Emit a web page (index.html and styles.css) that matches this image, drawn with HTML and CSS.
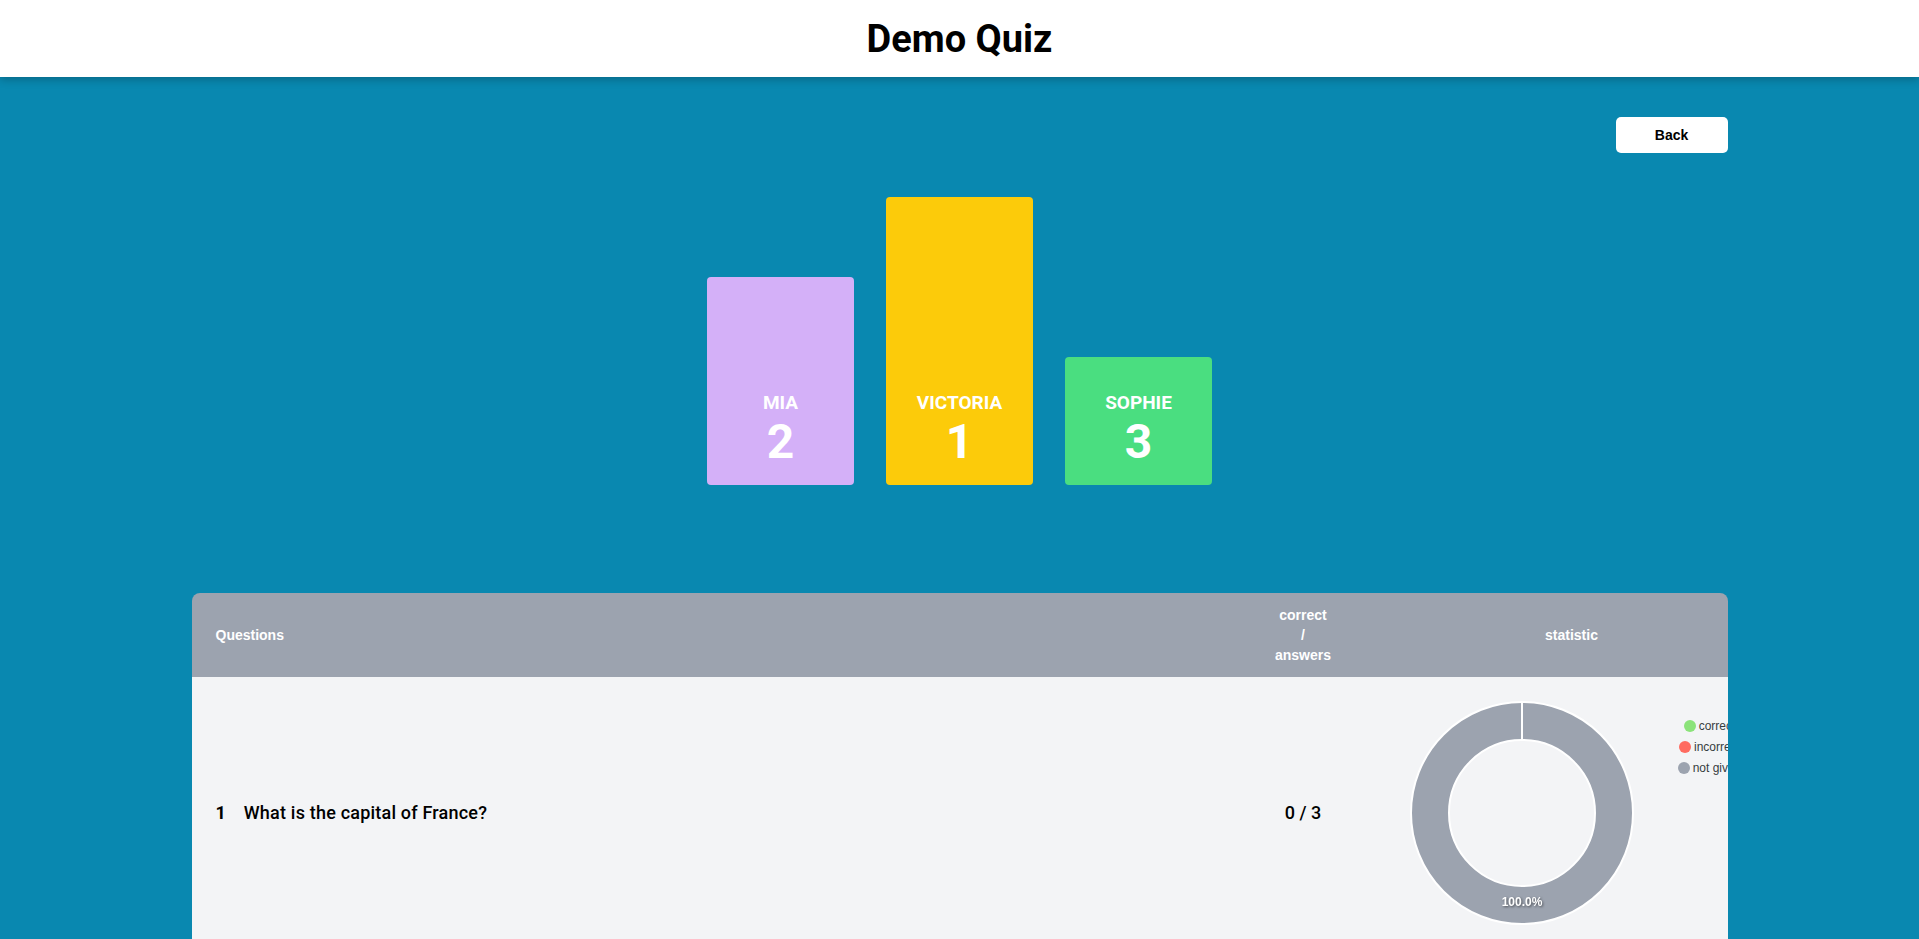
FILE: index.html
```html
<!DOCTYPE html>
<html lang="en">
<head>
<meta charset="utf-8">
<title>Demo Quiz</title>
<link rel="stylesheet" href="styles.css">
</head>
<body>
<header class="topbar">
  <h1 class="title">Demo Quiz</h1>
</header>
<main class="container">
  <div class="actions">
    <button class="back-btn" type="button">Back</button>
  </div>
  <div class="podium">
    <div class="bar bar-second">
      <span class="bar-name">MIA</span>
      <span class="bar-rank">2</span>
    </div>
    <div class="bar bar-first">
      <span class="bar-name">VICTORIA</span>
      <span class="bar-rank">1</span>
    </div>
    <div class="bar bar-third">
      <span class="bar-name">SOPHIE</span>
      <span class="bar-rank">3</span>
    </div>
  </div>
  <section class="results">
    <div class="results-head">
      <div class="head-question">Questions</div>
      <div class="head-score">correct<br>/<br>answers</div>
      <div class="head-stat">statistic</div>
    </div>
    <div class="results-row">
      <div class="question">
        <span class="q-num">1</span>
        <span class="q-text">What is the capital of France?</span>
      </div>
      <div class="score">0 / 3</div>
      <div class="stat">
        <svg class="donut" width="226" height="226" viewBox="0 0 226 226">
          <circle cx="113" cy="113" r="92" fill="none" stroke="#9ca3af" stroke-width="38"/>
          <circle cx="113" cy="113" r="111" fill="none" stroke="#ffffff" stroke-width="2"/>
          <circle cx="113" cy="113" r="73" fill="none" stroke="#ffffff" stroke-width="2"/>
          <line x1="113" y1="1" x2="113" y2="41" stroke="#ffffff" stroke-width="2"/>
          <text class="donut-label" x="113" y="206" text-anchor="middle">100.0%</text>
        </svg>
        <ul class="legend">
          <li class="legend-item"><span class="dot dot-correct"></span>correct</li>
          <li class="legend-item"><span class="dot dot-incorrect"></span>incorrect</li>
          <li class="legend-item"><span class="dot dot-none"></span>not given</li>
        </ul>
      </div>
    </div>
  </section>
</main>
</body>
</html>
```

FILE: styles.css
```css
* {
  box-sizing: border-box;
}

html, body {
  margin: 0;
  padding: 0;
}

body {
  background: #0988b0;
  font-family: Roboto, "Noto Sans", Arial, sans-serif;
  color: #000;
  min-height: 939px;
  overflow: hidden;
}

.topbar {
  height: 77px;
  background: #ffffff;
  display: flex;
  align-items: center;
  justify-content: center;
  box-shadow: 0 3px 8px rgba(0, 0, 0, 0.22);
  position: relative;
  z-index: 1;
}

.title {
  margin: 0;
  font-size: 38px;
  line-height: 40px;
  font-weight: 700;
  color: #000;
}

.container {
  max-width: 1536px;
  margin: 0 auto;
}

.actions {
  display: flex;
  justify-content: flex-end;
  padding-top: 40px;
}

.back-btn {
  width: 112px;
  height: 36px;
  border: none;
  border-radius: 5px;
  background: #ffffff;
  font-family: "Liberation Sans", Arial, sans-serif;
  font-size: 14px;
  font-weight: 700;
  color: #000;
  cursor: pointer;
}

.podium {
  margin-top: 44px;
  display: flex;
  justify-content: center;
  align-items: flex-end;
  gap: 32px;
}

.bar {
  width: 147px;
  border-radius: 4px;
  display: flex;
  flex-direction: column;
  align-items: center;
  justify-content: flex-end;
  padding-bottom: 19px;
  color: #ffffff;
  font-weight: 700;
}

.bar-first {
  height: 288px;
  background: #fccb0a;
}

.bar-second {
  height: 208px;
  background: #d4b0f8;
}

.bar-third {
  height: 128px;
  background: #4ade80;
}

.bar-name {
  font-size: 19px;
  line-height: 28px;
  position: relative;
  top: -1px;
}

.bar-rank {
  font-size: 48px;
  line-height: 48px;
}

.results {
  margin-top: 108px;
  border-radius: 8px 8px 0 0;
  overflow: hidden;
}

.results-head,
.results-row {
  display: grid;
  grid-template-columns: 1fr 211px 319px;
  align-items: center;
}

.results-head {
  background: #9ca3af;
  color: #ffffff;
  font-family: "Liberation Sans", Arial, sans-serif;
  font-size: 14px;
  line-height: 20px;
  font-weight: 700;
  padding: 12px 0;
  height: 84px;
}

.head-question {
  padding-left: 24px;
}

.head-score {
  text-align: center;
}

.head-stat {
  text-align: center;
  padding-left: 7px;
}

.results-row {
  background: #f3f4f6;
  padding: 23px 0;
}

.question {
  padding-left: 24px;
  display: flex;
  align-items: baseline;
  gap: 18px;
  font-size: 18px;
  line-height: 28px;
}

.q-num {
  font-weight: 700;
}

.q-text {
  font-weight: 500;
  letter-spacing: 0.2px;
}

.score {
  text-align: center;
  font-size: 18px;
  line-height: 28px;
  font-weight: 500;
}

.stat {
  display: flex;
  align-items: flex-start;
  height: 226px;
}

.donut {
  display: block;
  flex: none;
}

.donut-label {
  font-family: "Liberation Sans", Arial, sans-serif;
  font-size: 12px;
  font-weight: 700;
  fill: #ffffff;
  filter: drop-shadow(1px 1px 1px rgba(0, 0, 0, 0.5));
}

.legend {
  list-style: none;
  margin: 15px 0 0;
  padding: 0;
  width: 150px;
  flex: none;
  font-family: "Liberation Sans", Arial, sans-serif;
  font-size: 12px;
  color: #373d3f;
}

.legend-item {
  height: 21.3px;
  display: flex;
  align-items: center;
  justify-content: center;
  white-space: nowrap;
}

.dot {
  width: 12px;
  height: 12px;
  border-radius: 50%;
  margin-right: 3px;
  flex: none;
}

.dot-correct {
  background: #8be37a;
}

.dot-incorrect {
  background: #ff6b60;
}

.dot-none {
  background: #9ca3af;
}
```
